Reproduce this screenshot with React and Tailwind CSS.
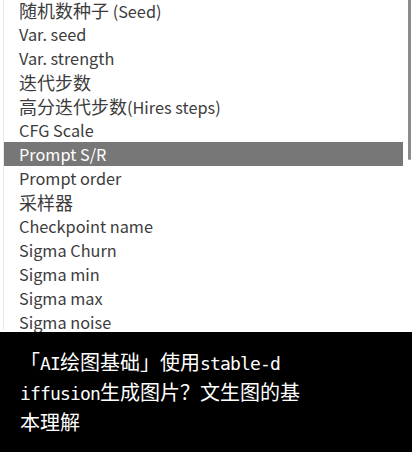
import React from "react";

const items = [
  "随机数种子 (Seed)",
  "Var. seed",
  "Var. strength",
  "迭代步数",
  "高分迭代步数(Hires steps)",
  "CFG Scale",
  "Prompt S/R",
  "Prompt order",
  "采样器",
  "Checkpoint name",
  "Sigma Churn",
  "Sigma min",
  "Sigma max",
  "Sigma noise",
  "Eta",
];

function Runs({ text }) {
  const parts = text.match(/[\u3000-\u9fff\uff00-\uffef]+|[^\u3000-\u9fff\uff00-\uffef]+/g) || [];
  return parts.map((p, i) =>
    /[\u3000-\u9fff\uff00-\uffef]/.test(p) ? (
      <span key={i} className="text-[18px]">{p}</span>
    ) : (
      <span key={i} className="text-[16.3px]">{p}</span>
    )
  );
}

const M = ({ children }) => (
  <span className="font-['DejaVu_Sans_Mono',monospace] text-[18px] tracking-[-0.84px] leading-none font-light">{children}</span>
);

export default function App() {
  return (
    <div className="w-[412px] h-[452px] flex flex-col bg-white overflow-hidden">
      <div className="relative h-[332px] overflow-hidden bg-white">
        <div className="ml-[3px] w-[401px] h-full border-l border-[#e8e8e8] -mt-[2px] font-['Noto_Sans_CJK_SC','Noto_Sans',sans-serif]">
          {items.map((t) => {
            const sel = t === "Prompt S/R";
            return (
              <div
                key={t}
                className={
                  "h-[24px] leading-[24px] pl-[15px] whitespace-nowrap w-[399px] overflow-hidden " +
                  (sel ? "bg-[#777777] text-white" : "text-[#3c3c3c]")
                }
              >
                <Runs text={t} />
              </div>
            );
          })}
        </div>
        <div className="absolute right-[1px] top-0 w-[3px] h-[160px] bg-[#8c8c8c] rounded-b-[2px]" />
      </div>
      <div className="flex-1 bg-black text-white pl-[20px] pt-[15px] font-['Noto_Sans_CJK_SC',sans-serif] text-[20px]">
        <div className="whitespace-nowrap h-[30px] leading-[30px] overflow-visible">
          「<M>AI</M>绘图基础」使用<M>stable-d</M>
        </div>
        <div className="whitespace-nowrap h-[30px] leading-[30px] overflow-visible">
          <M>iffusion</M>生成图片？文生图的基
        </div>
        <div className="whitespace-nowrap h-[30px] leading-[30px]">本理解</div>
      </div>
    </div>
  );
}
